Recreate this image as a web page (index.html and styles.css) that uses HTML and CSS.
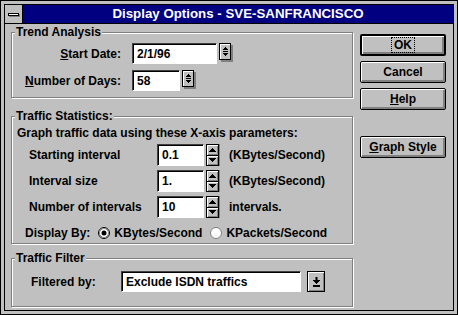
FILE: index.html
```html
<!DOCTYPE html>
<html lang="en">
<head>
    <meta charset="UTF-8">
    <title>Display Options - SVE-SANFRANCISCO</title>
    <link rel="stylesheet" href="styles.css">
</head>
<body>

<div class="window">
  <div class="frame">
    <div class="titlebar">
        <div class="sysmenu"><span class="sysbar"></span></div>
        <div class="caption">Display Options - SVE-SANFRANCISCO</div>
    </div>

    <div class="client">
        <div class="groups">

            <!-- Trend Analysis -->
            <fieldset class="group trend">
                <legend>Trend Analysis</legend>
                <div class="trend-grid">
                    <span class="rlabel"><u>S</u>tart Date:</span>
                    <div class="field">
                        <span class="edit w-date">2/1/96</span>
                        <span class="spin1">
                            <svg width="5" height="9" viewBox="0 0 5 9"><path d="M2 0h1v1h-1z M1 1h3v1h-3z M0 2h5v1h-5z M0 4h5v1h-5z M0 6h5v1h-5z M1 7h3v1h-3z M2 8h1v1h-1z" fill="#000"/></svg>
                        </span>
                    </div>
                    <span class="rlabel"><u>N</u>umber of Days:</span>
                    <div class="field">
                        <span class="edit w-days">58</span>
                        <span class="spin1">
                            <svg width="5" height="9" viewBox="0 0 5 9"><path d="M2 0h1v1h-1z M1 1h3v1h-3z M0 2h5v1h-5z M0 4h5v1h-5z M0 6h5v1h-5z M1 7h3v1h-3z M2 8h1v1h-1z" fill="#000"/></svg>
                        </span>
                    </div>
                </div>
            </fieldset>

            <!-- Traffic Statistics -->
            <fieldset class="group stats">
                <legend>Traffic Statistics:</legend>
                <div class="stats-intro">Graph traffic data using these X-axis parameters:</div>

                <div class="stats-row">
                    <span class="slabel">Starting interval</span>
                    <span class="edit w-num">0.1</span>
                    <span class="spin2">
                        <span class="half"><svg width="7" height="4" viewBox="0 0 7 4"><path d="M3 0h1v1h-1z M2 1h3v1h-3z M1 2h5v1h-5z M0 3h7v1h-7z" fill="#000"/></svg></span>
                        <span class="half"><svg width="7" height="4" viewBox="0 0 7 4"><path d="M0 0h7v1h-7z M1 1h5v1h-5z M2 2h3v1h-3z M3 3h1v1h-1z" fill="#000"/></svg></span>
                    </span>
                    <span class="unit">(KBytes/Second)</span>
                </div>
                <div class="stats-row">
                    <span class="slabel">Interval size</span>
                    <span class="edit w-num">1.</span>
                    <span class="spin2">
                        <span class="half"><svg width="7" height="4" viewBox="0 0 7 4"><path d="M3 0h1v1h-1z M2 1h3v1h-3z M1 2h5v1h-5z M0 3h7v1h-7z" fill="#000"/></svg></span>
                        <span class="half"><svg width="7" height="4" viewBox="0 0 7 4"><path d="M0 0h7v1h-7z M1 1h5v1h-5z M2 2h3v1h-3z M3 3h1v1h-1z" fill="#000"/></svg></span>
                    </span>
                    <span class="unit">(KBytes/Second)</span>
                </div>
                <div class="stats-row">
                    <span class="slabel">Number of intervals</span>
                    <span class="edit w-num">10</span>
                    <span class="spin2">
                        <span class="half"><svg width="7" height="4" viewBox="0 0 7 4"><path d="M3 0h1v1h-1z M2 1h3v1h-3z M1 2h5v1h-5z M0 3h7v1h-7z" fill="#000"/></svg></span>
                        <span class="half"><svg width="7" height="4" viewBox="0 0 7 4"><path d="M0 0h7v1h-7z M1 1h5v1h-5z M2 2h3v1h-3z M3 3h1v1h-1z" fill="#000"/></svg></span>
                    </span>
                    <span class="unit">intervals.</span>
                </div>

                <div class="display-by">
                    <span>Display By:</span>
                    <span class="radio">
                        <svg width="12" height="12" viewBox="0 0 12 12"><circle cx="6" cy="6" r="5.5" fill="#fff" stroke="#000"/><circle cx="6" cy="6" r="4.5" fill="none" stroke="#808080"/><circle cx="6" cy="6" r="2.5" fill="#000"/></svg>
                        KBytes/Second
                    </span>
                    <span class="radio">
                        <svg width="12" height="12" viewBox="0 0 12 12"><circle cx="6" cy="6" r="5.5" fill="#fff" stroke="#808080"/></svg>
                        KPackets/Second
                    </span>
                </div>
            </fieldset>

            <!-- Traffic Filter -->
            <fieldset class="group filter">
                <legend>Traffic Filter</legend>
                <div class="filter-row">
                    <span class="flabel">Filtered by:</span>
                    <span class="edit w-combo">Exclude ISDN traffics</span>
                    <span class="dropbtn">
                        <svg width="7" height="10" viewBox="0 0 7 10"><path d="M2.5 0h2v3h-2z M0 3h7v1h-7z M1 4h5v1h-5z M2 5h3v1h-3z M3 6h1v1h-1z M0 8h7v2h-7z" fill="#000"/></svg>
                    </span>
                </div>
            </fieldset>
        </div>

        <!-- Command buttons -->
        <div class="buttons">
            <button class="btn default"><span class="focus">OK</span></button>
            <button class="btn">Cancel</button>
            <button class="btn"><span><u>H</u>elp</span></button>
            <button class="btn graph"><span><u>G</u>raph Style</span></button>
        </div>
    </div>
  </div>
</div>

</body>
</html>
```

FILE: styles.css
```css
/* General */
body {
    margin: 0;
    font-family: "Liberation Sans", Arial, sans-serif;
    font-size: 12px;
    font-weight: bold;
    color: #000;
    background: #c0c0c0;
}

/* Window frame */
.window {
    width: 458px;
    height: 315px;
    box-sizing: border-box;
    border: 1px solid #000;
    padding: 3px;
    background: #c0c0c0;
}

.frame {
    height: 100%;
    box-sizing: border-box;
    border: 1px solid #000;
    display: flex;
    flex-direction: column;
}

/* Title bar */
.titlebar {
    display: flex;
    height: 18px;
    border-bottom: 1px solid #000;
}

.sysmenu {
    width: 17px;
    background: #c0c0c0;
    border-right: 1px solid #000;
    display: flex;
    align-items: center;
    justify-content: center;
}

.sysbar {
    width: 9px;
    height: 1px;
    background: #fff;
    border: 1px solid #000;
    box-shadow: 1px 1px 0 #808080;
}

.caption {
    flex: 1;
    background: #000080;
    color: #fff;
    font-size: 13.3px;
    line-height: 18px;
    text-align: center;
}

/* Client area */
.client {
    flex: 1;
    display: flex;
    gap: 7px;
    padding: 1px 0 0 6px;
}

.groups {
    width: 342px;
    display: flex;
    flex-direction: column;
}

/* Group boxes */
.group {
    margin: 0;
    padding: 0;
    min-width: 0;
    border: 1px solid #808080;
    box-shadow: inset 1px 1px 0 #fff, 1px 1px 0 #fff;
}

.group legend {
    margin-left: 3px;
    padding: 0 1px;
    line-height: 14px;
    background: #c0c0c0;
}

.stats {
    margin-top: 11px;
}

.filter {
    margin-top: 7px;
}

/* Edit fields */
.edit {
    display: block;
    height: 21px;
    box-sizing: border-box;
    background: #fff;
    border-top: 1px solid #404040;
    border-left: 1px solid #404040;
    border-right: 1px solid #fff;
    border-bottom: 1px solid #fff;
    box-shadow: inset 1px 1px 0 #000;
    padding-left: 4px;
    line-height: 20px;
    white-space: nowrap;
}

.w-date { width: 85px; }
.w-days { width: 48px; }
.w-num { width: 47px; height: 22px; line-height: 21px; }
.w-combo { width: 180px; }

/* Trend Analysis */
.trend-grid {
    display: grid;
    grid-template-columns: 109px auto;
    column-gap: 11px;
    row-gap: 6px;
    align-items: center;
    padding: 4px 0 6px;
}

.rlabel {
    text-align: right;
}

.field {
    display: flex;
    align-items: flex-start;
    gap: 2px;
}

.spin1 {
    width: 10px;
    height: 15px;
    border: 1px solid #000;
    background: #c0c0c0;
    box-shadow: inset 1px 1px 0 #fff, 2px 2px 0 #808080;
    display: flex;
    align-items: center;
    justify-content: center;
}

/* Traffic Statistics */
.stats-intro {
    padding: 3px 0 0 5px;
    line-height: 14px;
}

.stats-row {
    display: flex;
    align-items: center;
    height: 22px;
    margin-top: 4px;
    padding-left: 17px;
}

.slabel {
    width: 128px;
}

.spin2 {
    width: 11px;
    height: 20px;
    margin-left: 2px;
    border: 1px solid #000;
    display: flex;
    flex-direction: column;
    box-shadow: 1px 0 0 #808080;
}

.spin2 .half {
    flex: 1;
    background: #c0c0c0;
    box-shadow: inset 1px 1px 0 #fff, inset -1px -1px 0 #808080;
    display: flex;
    align-items: center;
    justify-content: center;
}

.spin2 .half + .half {
    border-top: 1px solid #000;
}

.unit {
    margin-left: 10px;
}

.display-by {
    display: flex;
    align-items: center;
    gap: 6px;
    line-height: 14px;
    padding: 8px 0 3px 13px;
}

.radio {
    display: flex;
    align-items: center;
    gap: 4px;
    margin-left: 2px;
}

/* Traffic Filter */
.filter-row {
    display: flex;
    align-items: center;
    padding: 6px 0 14px;
}

.flabel {
    width: 90px;
    padding-left: 19px;
}

.dropbtn {
    width: 16px;
    height: 19px;
    margin-left: 6px;
    border: 1px solid #000;
    background: #c0c0c0;
    box-shadow: inset 1px 1px 0 #fff, inset -1px -1px 0 #808080;
    display: flex;
    align-items: center;
    justify-content: center;
}

/* Command buttons */
.buttons {
    width: 86px;
    display: flex;
    flex-direction: column;
    gap: 5px;
    padding-top: 9px;
}

.btn {
    height: 22px;
    box-sizing: border-box;
    padding: 0;
    border: 1px solid #000;
    border-radius: 2px;
    background: #c0c0c0;
    box-shadow: inset 1px 1px 0 #fff, inset -2px -2px 0 #808080;
    font: inherit;
    color: #000;
    display: flex;
    align-items: center;
    justify-content: center;
}

.btn.default {
    border-width: 2px;
}

.btn .focus {
    outline: 1px dotted #000;
    padding: 0 2px;
    line-height: 14px;
}

.btn.graph {
    margin-top: 21px;
}
```
